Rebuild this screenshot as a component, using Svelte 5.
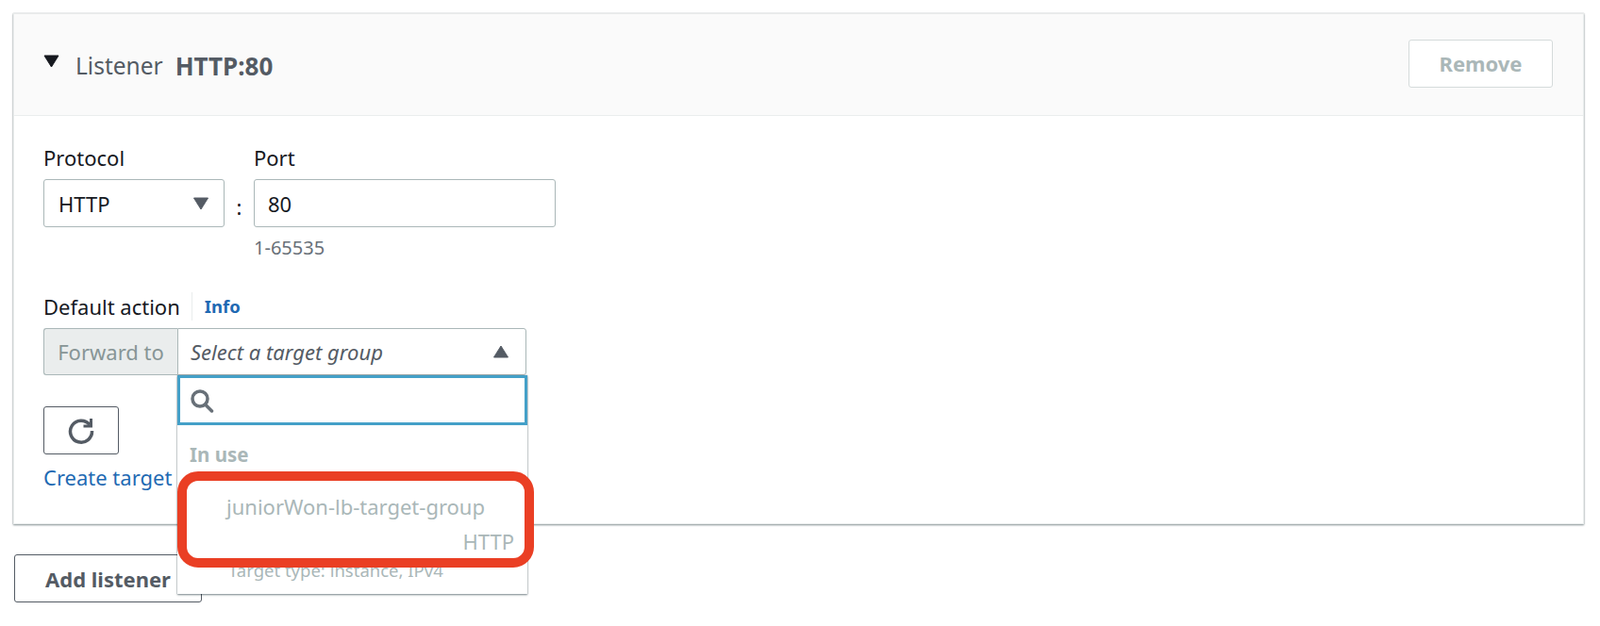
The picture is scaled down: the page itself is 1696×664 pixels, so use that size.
<script lang="ts">
  let port = $state('80');
</script>

<div class="page">
  <section class="card">
    <header class="card-head">
      <div class="title">
        <svg class="caret" width="17" height="14" viewBox="0 0 17 14"><path d="M1 1h15L8.500 13z" fill="#16191f" stroke="#16191f" stroke-linejoin="round" /></svg>
        <span>Listener</span>
        <b>HTTP:80</b>
      </div>
      <button class="btn remove" disabled>Remove</button>
    </header>

    <div class="card-body">
      <div class="fields">
        <div class="field">
          <span class="label">Protocol</span>
          <div class="select proto">
            <span>HTTP</span>
            <svg width="18" height="14" viewBox="0 0 18 14"><path d="M1.500 1h15L9 13z" fill="#545b64" stroke="#545b64" stroke-linejoin="round" /></svg>
          </div>
        </div>
        <span class="colon">:</span>
        <div class="field">
          <span class="label">Port</span>
          <input class="port" bind:value={port} />
          <span class="hint">1-65535</span>
        </div>
      </div>

      <div class="action-label">
        <span class="label">Default action</span>
        <a class="info" href="#info">Info</a>
      </div>

      <div class="action">
        <div class="group">
          <span class="addon">Forward to</span>
          <div class="select target">
            <i>Select a target group</i>
            <svg width="18" height="14" viewBox="0 0 18 14"><path d="M1.500 13h15L9 1z" fill="#545b64" stroke="#545b64" stroke-linejoin="round" /></svg>
          </div>
        </div>

        <div class="menu">
          <div class="search">
            <svg width="26" height="26" viewBox="0 0 26 26" fill="none" stroke="#687078" stroke-width="3.500"><circle cx="11" cy="11" r="8" /><path d="M16.500 17l7 7" stroke-linecap="round" /></svg>
          </div>
          <div class="group-name">In use</div>
          <div class="option">
            <div class="opt-name">juniorWon-lb-target-group</div>
            <div class="opt-proto">HTTP</div>
            <div class="opt-type">Target type: instance, IPv4</div>
          </div>
          <div class="highlight"></div>
        </div>
      </div>

      <button class="btn refresh" aria-label="Refresh">
        <svg width="30" height="30" viewBox="0 0 30 30" fill="none" stroke="#545b64" stroke-width="3.500"><path d="M24 8.500A11.500 11.500 0 1 0 26.500 15" /><path d="M25.500 2v8h-8" stroke-width="3" /></svg>
      </button>
      <a class="create" href="#create">Create target group</a>
    </div>
  </section>

  <button class="btn add">Add listener</button>
</div>

<style>
  :global(body) {
    margin: 0;
    background: #fff;
  }

  .page {
    width: 1696px;
    height: 664px;
    padding: 14px 17px 0 14px;
    box-sizing: border-box;
    font-family: "Noto Sans", "Open Sans", sans-serif;
    font-size: 22px;
    color: #16191f;
    overflow: hidden;
  }

  .card {
    height: 542px;
    box-sizing: border-box;
    background: #fff;
    border: 1px solid #eaeded;
    border-top-color: #e8eaea;
    box-shadow: 0 1px 2px rgba(0, 28, 36, 0.45), 0 0 1px rgba(0, 28, 36, 0.3);
  }

  .card-head {
    height: 108px;
    box-sizing: border-box;
    background: #fafafa;
    border-bottom: 1px solid #eaeded;
    display: flex;
    align-items: center;
    justify-content: space-between;
    padding: 0 32px 0 31px;
  }

  .title {
    display: flex;
    align-items: center;
    font-size: 24.500px;
    color: #545b64;
    padding-top: 2px;
  }

  .caret {
    margin: -10px 17px 0 0;
  }

  .title b {
    margin-left: 13px;
    font-size: 26px;
    font-weight: 700;
  }

  .btn {
    font: inherit;
    font-weight: 700;
    background: #fff;
    border: 1px solid #545b64;
    border-radius: 3px;
    box-sizing: border-box;
    height: 51px;
    padding: 0;
    color: #545b64;
  }

  .remove {
    width: 153px;
    border-color: #d5dbdb;
    color: #aab7b8;
    margin-top: -3px;
  }

  .card-body {
    padding: 0 31px;
  }

  .fields {
    display: flex;
    padding-top: 29px;
    height: 165px;
    box-sizing: border-box;
  }

  .field {
    display: flex;
    flex-direction: column;
  }

  .label {
    line-height: 30px;
  }

  .select {
    display: flex;
    align-items: center;
    justify-content: space-between;
    background: #fff;
    box-sizing: border-box;
    border: 1px solid #aab7b8;
  }

  .proto {
    width: 192px;
    height: 51px;
    margin-top: 8px;
    padding: 0 15px 0 15px;
    border-radius: 3px;
  }

  .colon {
    width: 31px;
    text-align: center;
    padding-top: 52px;
    line-height: 30px;
  }

  .port {
    width: 320px;
    height: 51px;
    margin-top: 8px;
    padding: 0 14px;
    box-sizing: border-box;
    border: 1px solid #aab7b8;
    border-radius: 3px;
    font: inherit;
    color: #16191f;
    outline: none;
  }

  .hint {
    font-size: 20px;
    line-height: 24px;
    margin-top: 10px;
    color: #687078;
  }

  .action-label {
    display: flex;
    align-items: center;
    margin-top: 22px;
    height: 30px;
  }

  .info {
    margin-left: 12px;
    padding-left: 13px;
    border-left: 1px solid #eaeded;
    color: #1f6ab3;
    font-size: 18.500px;
    font-weight: 700;
    text-decoration: none;
    line-height: 30px;
  }

  .action {
    position: relative;
    margin-top: 8px;
  }

  .group {
    display: flex;
    width: 512px;
    height: 50px;
  }

  .addon {
    width: 142px;
    box-sizing: border-box;
    background: #eaeded;
    border: 1px solid #aab7b8;
    border-right: 0;
    border-radius: 3px 0 0 3px;
    color: #879596;
    display: flex;
    align-items: center;
    justify-content: center;
  }

  .target {
    flex: 1;
    border-radius: 0 3px 3px 0;
    padding: 0 17px 0 13px;
    color: #545b64;
  }

  .menu {
    position: absolute;
    top: 50px;
    left: 142px;
    width: 371px;
    height: 232px;
    box-sizing: border-box;
    background: #fff;
    box-shadow: 0 1px 2px rgba(0, 28, 36, 0.5), 0 0 1px rgba(0, 28, 36, 0.4);
    z-index: 2;
    color: #aab7b8;
  }

  .search {
    height: 53px;
    box-sizing: border-box;
    border: 3px solid #44a0c8;
    display: flex;
    align-items: center;
    padding-left: 10px;
  }

  .group-name {
    font-size: 20.500px;
    font-weight: 700;
    line-height: 30px;
    margin: 16px 0 0 13px;
  }

  .option {
    margin-top: 12px;
    text-align: right;
    padding-right: 14px;
  }

  .opt-name {
    line-height: 30px;
    padding: 13px 31px 0 0;
  }

  .opt-proto {
    line-height: 30px;
    margin-top: 7px;
  }

  .opt-type {
    font-size: 18.500px;
    line-height: 24px;
    text-align: left;
    padding-left: 54px;
    margin-top: 4px;
  }

  .highlight {
    position: absolute;
    left: 0;
    top: 102px;
    width: 378px;
    height: 102px;
    box-sizing: border-box;
    border: 10px solid #ea3f24;
    border-radius: 22px;
  }

  .refresh {
    display: flex;
    align-items: center;
    justify-content: center;
    width: 80px;
    margin-top: 33px;
  }

  .create {
    display: block;
    margin-top: 9px;
    line-height: 30px;
    color: #1f6ab3;
    text-decoration: none;
    white-space: nowrap;
  }

  .add {
    width: 199px;
    margin-top: 32px;
    margin-left: 1px;
  }
</style>
